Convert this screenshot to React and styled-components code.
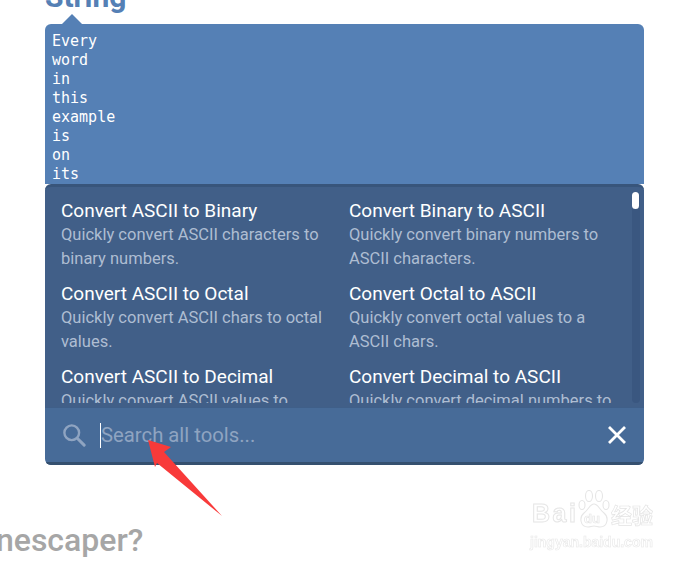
import React from "react";
import styled, { createGlobalStyle } from "styled-components";

const Global = createGlobalStyle`
  html, body { margin: 0; padding: 0; background: #fff; }
  body { width: 691px; height: 565px; overflow: hidden; font-family: Roboto, "Liberation Sans", sans-serif; }
`;
const Page = styled.main`
  position: relative;
  width: 691px;
  height: 565px;
  overflow: hidden;
`;
const Heading = styled.h2`
  margin: -20px 0 0 45px;
  height: 44px;
  font: 700 30px/33px Roboto, sans-serif;
  color: #5580b5;
`;
const Widget = styled.section`
  position: relative;
  width: 599px;
  margin-left: 45px;
  border-radius: 6px;
  overflow: hidden;
`;
const Notch = styled.div`
  position: absolute;
  left: 62px;
  top: 14px;
  width: 20px;
  height: 10px;
  background: #5580b5;
  clip-path: polygon(50% 0, 100% 100%, 0 100%);
`;
const Editor = styled.pre`
  margin: 0;
  height: 152px;
  padding: 8px 7px 0;
  overflow: hidden;
  background: #5580b5;
  color: #fff;
  font: 15px/19px "DejaVu Sans Mono", monospace;
`;
const Results = styled.div`
  position: relative;
  height: 220px;
  border-top: 3px solid #38557b;
  border-radius: 6px 6px 0 0;
  background: #415f88;
  overflow: hidden;
`;
const Scroller = styled.div`
  height: 216px;
  overflow: hidden;
`;
const Grid = styled.div`
  display: grid;
  grid-template-columns: 288px 270px;
  row-gap: 11px;
  padding: 12px 0 0 16px;
`;
const Item = styled.article`
  width: 272px;
`;
const Title = styled.h3`
  margin: 0;
  font: 400 19px/24px Roboto, sans-serif;
  color: #fff;
`;
const Desc = styled.p`
  margin: 0;
  font: 400 16.5px/24px Roboto, sans-serif;
  color: #aebdd2;
`;
const Track = styled.div`
  position: absolute;
  right: 4px;
  top: 5px;
  bottom: 4px;
  width: 8px;
  border-radius: 4px;
  background: #3a5780;
`;
const Thumb = styled.div`
  width: 7px;
  height: 17px;
  border-radius: 4px;
  background: #fff;
`;
const SearchBar = styled.div`
  display: flex;
  align-items: center;
  height: 54px;
  padding: 0 17px 0 18px;
  background: #476b98;
  border-top: 1px solid #3f5f89;
  border-bottom: 3px solid #35506f;
`;
const SearchIcon = styled.svg`
  width: 23px;
  height: 23px;
  flex: none;
`;
const Field = styled.div`
  flex: 1;
  display: flex;
  align-items: center;
  margin-left: 14px;
  font: 400 20.3px/26px Roboto, sans-serif;
  color: #8fa4c1;
`;
const Caret = styled.span`
  width: 1px;
  height: 25px;
  background: #fff;
`;
const Close = styled.svg`
  width: 20px;
  height: 20px;
  flex: none;
`;
const Footer = styled.h2`
  margin: 56px 0 0 -25px;
  white-space: nowrap;
  font: 500 32px/38px Roboto, sans-serif;
  color: #a6a6a6;
`;
const Arrow = styled.svg`
  position: absolute;
  left: 0;
  top: 0;
  pointer-events: none;
`;
const Mark = styled.div`
  position: absolute;
  left: 530px;
  top: 490px;
  width: 126px;
  display: flex;
  flex-direction: column;
  gap: 7px;
  color: transparent;
  pointer-events: none;
  filter: blur(0.4px);
`;
const MarkRow = styled.div`
  display: flex;
  align-items: flex-end;
  height: 38px;
`;
const MarkBrand = styled.span`
  flex: none;
  width: 46px;
  margin-left: 2px;
  font: 700 25px/30px "Liberation Sans", sans-serif;
  letter-spacing: 2.5px;
  -webkit-text-stroke: 1px #e6e6e6;
`;
const PawBox = styled.div`
  position: relative;
  flex: none;
  width: 32px;
  height: 38px;
`;
const MarkDu = styled.span`
  position: absolute;
  left: 6px;
  top: 21px;
  font: 700 13px/15px "Liberation Sans", sans-serif;
  -webkit-text-stroke: 0.7px #e6e6e6;
`;
const MarkCjk = styled.span`
  margin-left: 1px;
  white-space: nowrap;
  font: 700 21px/28px "Noto Sans CJK SC", sans-serif;
  -webkit-text-stroke: 0.7px #e4e4e4;
`;
const MarkUrl = styled.div`
  white-space: nowrap;
  font: 700 14px/14px "Liberation Sans", sans-serif;
  -webkit-text-stroke: 0.6px #e8e8e8;
`;

const tools = [
  ["Convert ASCII to Binary", "Quickly convert ASCII characters to binary numbers."],
  ["Convert Binary to ASCII", "Quickly convert binary numbers to ASCII characters."],
  ["Convert ASCII to Octal", "Quickly convert ASCII chars to octal values."],
  ["Convert Octal to ASCII", "Quickly convert octal values to a ASCII chars."],
  ["Convert ASCII to Decimal", "Quickly convert ASCII values to decimal numbers."],
  ["Convert Decimal to ASCII", "Quickly convert decimal numbers to ASCII values."],
];

export default function App() {
  return (
    <Page>
      <Global />
      <Heading>String</Heading>
      <Notch />
      <Widget>
        <Editor>{"Every\nword\nin\nthis\nexample\nis\non\nits"}</Editor>
        <Results>
          <Scroller>
            <Grid>
              {tools.map(([t, d]) => (
                <Item key={t}>
                  <Title>{t}</Title>
                  <Desc>{d}</Desc>
                </Item>
              ))}
            </Grid>
          </Scroller>
          <Track><Thumb /></Track>
        </Results>
        <SearchBar>
          <SearchIcon viewBox="0 0 25 25" fill="none" stroke="#8fa4c1">
            <circle cx="9.5" cy="9.5" r="8" strokeWidth="2.6" />
            <path d="M15.5 15.5 23 23" strokeWidth="3.2" strokeLinecap="round" />
          </SearchIcon>
          <Field><Caret />Search all tools...</Field>
          <Close viewBox="0 0 20 20" stroke="#fff" strokeWidth="2.8">
            <path d="M2 2 18 18M18 2 2 18" />
          </Close>
        </SearchBar>
      </Widget>
      <Footer>Unescaper?</Footer>
      <Mark>
        <MarkRow>
          <MarkBrand>Bai</MarkBrand>
          <PawBox>
            <svg width="32" height="38" viewBox="0 0 32 38" fill="none" stroke="#e6e6e6" strokeWidth="1.1">
              <ellipse cx="4" cy="15" rx="3" ry="4.5" />
              <ellipse cx="11" cy="6" rx="3.5" ry="5.5" />
              <ellipse cx="21" cy="6" rx="3.5" ry="5.5" />
              <ellipse cx="28" cy="15" rx="3" ry="4.5" />
              <path d="M16 14c-4 0-5 5-10 9-5 4-4 14 4 14 2 0 4-1 6-1s4 1 6 1c8 0 9-10 4-14-5-4-6-9-10-9Z" />
            </svg>
            <MarkDu>du</MarkDu>
          </PawBox>
          <MarkCjk>经验</MarkCjk>
        </MarkRow>
        <MarkUrl>jingyan.baidu.com</MarkUrl>
      </Mark>
      <Arrow width="691" height="565" viewBox="0 0 691 565">
        <path d="M148 440 171 447 164 452 222 516 157 463 155 467Z" fill="#f83a3a" />
      </Arrow>
    </Page>
  );
}
